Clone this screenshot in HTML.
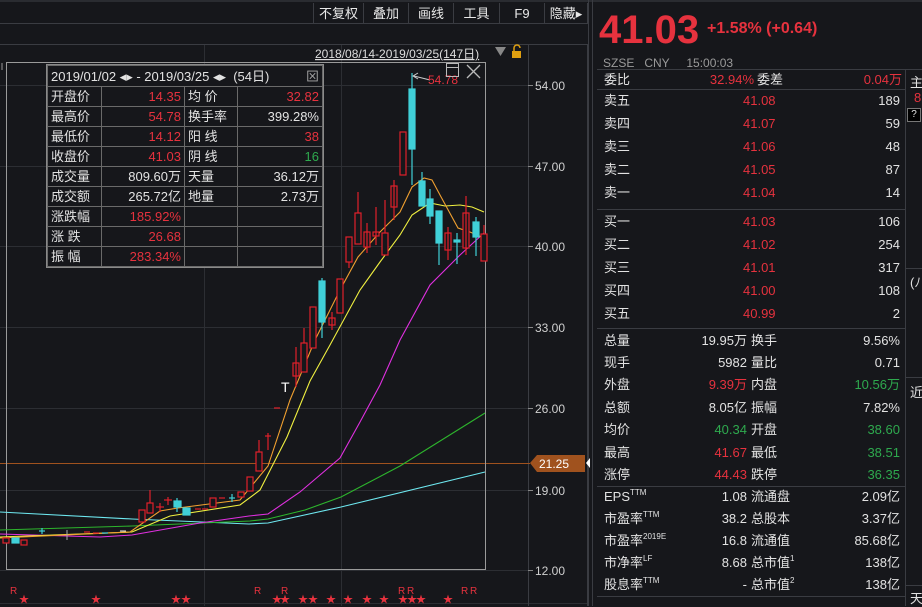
<!DOCTYPE html>
<html><head><meta charset="utf-8"><style>
*{margin:0;padding:0;box-sizing:border-box}
body{width:922px;height:606px;overflow:hidden;background:#16171b;font-family:"Liberation Sans","Noto Sans CJK SC",sans-serif;color:#e2e2e2;position:relative}
.a{position:absolute;white-space:nowrap}
.r{color:#e6323e}.g{color:#2ea94e}.w{color:#e2e2e2}
.tb{position:absolute;top:3px;height:21px;font-size:13px;line-height:21px;text-align:center;border-left:1px solid #3a3c42;color:#e8e8e8}
.info{position:absolute;left:46px;top:64px;width:278px;border:1px solid #8a8a8a;background:#16171b;font-size:13px}
.info table{border-collapse:collapse;width:100%}
.info td{border:1px solid #6a6a6a;height:20px;padding:0 3px;line-height:19px}
.info td.v{text-align:right}
.rp{font-size:13px}
.row{position:absolute;left:597px;width:308px;height:22px;line-height:22px}
.row span{position:absolute}
.hl{position:absolute;left:597px;width:308px;height:1px;background:#3a3c42}
sup{font-size:8px;vertical-align:baseline;position:relative;top:-6px;line-height:0}
</style></head><body>
<div class="a" style="left:0;top:0;width:922px;height:2px;background:#2a2c31"></div>
<div class="a" style="left:0;top:23px;width:588px;height:1px;background:#3a3c42"></div>
<div class="a" style="left:0;top:44px;width:588px;height:1px;background:#3a3c42"></div>
<div class="tb" style="left:313px;width:50px">不复权</div>
<div class="tb" style="left:363px;width:45px">叠加</div>
<div class="tb" style="left:408px;width:45px">画线</div>
<div class="tb" style="left:453px;width:46px">工具</div>
<div class="tb" style="left:499px;width:45px">F9</div>
<div class="tb" style="left:544px;width:44px;border-right:1px solid #3a3c42">隐藏▸</div>
<div class="a" style="left:588px;top:0;width:1px;height:606px;background:#3a3c42"></div>
<div class="a" style="left:592px;top:0;width:1px;height:606px;background:#3a3c42"></div>

<svg class="a" style="left:0;top:0" width="590" height="606">
<g stroke="#2c2e33" stroke-width="1">
<line x1="0" y1="85.5" x2="528" y2="85.5"/><line x1="0" y1="166.5" x2="528" y2="166.5"/><line x1="0" y1="246.5" x2="528" y2="246.5"/><line x1="0" y1="327.5" x2="528" y2="327.5"/><line x1="0" y1="408.5" x2="528" y2="408.5"/><line x1="0" y1="490.5" x2="528" y2="490.5"/><line x1="0" y1="570.5" x2="528" y2="570.5"/>
<line x1="204.5" y1="45" x2="204.5" y2="606"/><line x1="341.5" y1="45" x2="341.5" y2="606"/>
<line x1="0" y1="603.5" x2="588" y2="603.5"/>
</g>
<line x1="528.5" y1="45" x2="528.5" y2="606" stroke="#3a3c42"/>
<line x1="587.5" y1="45" x2="587.5" y2="606" stroke="#3a3c42"/>
<g stroke="#888" stroke-width="1"><line x1="528" y1="85.5" x2="533" y2="85.5"/><line x1="528" y1="166.5" x2="533" y2="166.5"/><line x1="528" y1="246.5" x2="533" y2="246.5"/><line x1="528" y1="327.5" x2="533" y2="327.5"/><line x1="528" y1="408.5" x2="533" y2="408.5"/><line x1="528" y1="490.5" x2="533" y2="490.5"/><line x1="528" y1="570.5" x2="533" y2="570.5"/></g>
<g font-size="12" fill="#d0d0d0" font-family="Liberation Sans"><text x="535" y="90">54.00</text><text x="535" y="171">47.00</text><text x="535" y="251">40.00</text><text x="535" y="332">33.00</text><text x="535" y="413">26.00</text><text x="535" y="495">19.00</text><text x="535" y="575">12.00</text></g>
<line x1="0" y1="463.5" x2="530" y2="463.5" stroke="#a0521e"/>
<polygon points="530,463 537,455 585,455 585,472 537,472" fill="#a0521e"/>
<text x="539" y="468" font-size="12" fill="#fff">21.25</text>
<polygon points="590,458 590,468 586,463" fill="#fff"/>
<rect x="6.5" y="62.5" width="479" height="507" fill="none" stroke="#9a9a9a"/>
<line x1="2" y1="63" x2="2" y2="70" stroke="#999"/>
<g fill="none" stroke-width="1.1">
<polyline stroke="#6ee8f0" points="0,512 132,519 249,524 268,523 341,507 485,472"/>
<polyline stroke="#2db52d" points="0,530 132,526 250,521 268,519 305,510 341,497 400,466 485,413"/>
<polyline stroke="#e030e0" points="0,534 100,537 132,535 200,523 249,516 268,514 300,492 340,458 360,422 380,385 400,340 430,285 460,255 484,233"/>
<polyline stroke="#f0f040" points="0,537 132,532 170,516 240,505 260,490 287,437 310,381 330,345 360,290 380,262 400,235 412,215 430,203 445,206 460,205 472,207 484,212"/>
<polyline stroke="#f0a030" points="0,538 130,532 160,511 178,508 240,500 268,466 290,400 315,340 340,290 358,257 380,232 400,212 412,187 424,178 432,180 440,195 458,228 470,232 484,238"/>
</g>
<g stroke="#e0202a" fill="#16171b" stroke-width="1.2">
<rect x="3" y="538" width="6" height="5"/><rect x="21" y="540" width="6" height="5"/>
<rect x="139" y="510" width="6" height="12"/><rect x="147" y="503" width="6" height="10"/><line x1="150" y1="490" x2="150" y2="503"/>
<rect x="210" y="498" width="6" height="9"/><rect x="238" y="492" width="6" height="5"/><rect x="247" y="477" width="6" height="14"/>
<rect x="256" y="452" width="6" height="19"/><line x1="259" y1="440" x2="259" y2="452"/>
<line x1="268" y1="433" x2="268" y2="450"/><line x1="265" y1="436" x2="271" y2="436"/>
<line x1="274" y1="408" x2="280" y2="408"/>
<rect x="293" y="363" width="6" height="13"/><line x1="296" y1="347" x2="296" y2="387"/>
<rect x="301" y="343" width="6" height="29"/><line x1="304" y1="328" x2="304" y2="343"/>
<rect x="310" y="307" width="6" height="41"/>
<rect x="329" y="318" width="6" height="7"/><line x1="332" y1="312" x2="332" y2="330"/>
<rect x="337" y="279" width="6" height="34"/>
<rect x="346" y="237" width="6" height="25"/><line x1="349" y1="262" x2="349" y2="268"/>
<rect x="355" y="213" width="6" height="31"/><line x1="358" y1="192" x2="358" y2="213"/>
<rect x="364" y="232" width="6" height="15"/><line x1="367" y1="223" x2="367" y2="253"/>
<rect x="373" y="232" width="6" height="4"/><line x1="376" y1="207" x2="376" y2="245"/>
<rect x="382" y="233" width="6" height="22"/><line x1="385" y1="200" x2="385" y2="233"/>
<rect x="391" y="186" width="6" height="21"/><line x1="394" y1="180" x2="394" y2="220"/>
<rect x="400" y="132" width="6" height="43"/>
<rect x="445" y="233" width="6" height="17"/><line x1="448" y1="227" x2="448" y2="260"/>
<rect x="463" y="213" width="6" height="35"/><line x1="466" y1="196" x2="466" y2="255"/>
<rect x="481" y="234" width="6" height="27"/><line x1="484" y1="225" x2="484" y2="234"/>
</g>
<g stroke="#e0202a" stroke-width="1.2"><line x1="160" y1="503" x2="160" y2="512"/><line x1="156" y1="507" x2="164" y2="507"/><line x1="168" y1="497" x2="168" y2="505"/><line x1="164" y1="500" x2="172" y2="500"/><line x1="195" y1="509" x2="201" y2="509"/><line x1="202" y1="509" x2="208" y2="509"/><line x1="219" y1="498" x2="225" y2="498"/><line x1="84" y1="532" x2="90" y2="532"/><line x1="93" y1="533" x2="99" y2="533"/></g>
<g stroke="#40d0d8" fill="#40d0d8" stroke-width="1.2">
<rect x="12" y="538" width="7" height="5"/>
<rect x="174" y="501" width="7" height="6"/><line x1="177" y1="498" x2="177" y2="512"/>
<rect x="183" y="508" width="7" height="7"/>
<line x1="229" y1="498" x2="235" y2="498"/><line x1="232" y1="494" x2="232" y2="502"/>
<line x1="102" y1="533" x2="108" y2="533"/><line x1="39" y1="531" x2="45" y2="531"/><line x1="42" y1="528" x2="42" y2="534"/>
<rect x="319" y="281" width="6" height="41"/><line x1="322" y1="278" x2="322" y2="338"/>
<rect x="409" y="89" width="6" height="60"/><line x1="412" y1="73" x2="412" y2="185"/>
<rect x="419" y="181" width="6" height="25"/><line x1="422" y1="172" x2="422" y2="181"/>
<rect x="427" y="199" width="6" height="17"/><line x1="430" y1="189" x2="430" y2="224"/>
<rect x="436" y="211" width="6" height="32"/><line x1="439" y1="243" x2="439" y2="265"/>
<rect x="454" y="240" width="6" height="2"/><line x1="457" y1="233" x2="457" y2="264"/>
<rect x="473" y="222" width="6" height="15"/><line x1="476" y1="217" x2="476" y2="256"/>
</g>
<line x1="67" y1="530" x2="67" y2="540" stroke="#aaa"/><line x1="120" y1="531" x2="126" y2="531" stroke="#eee"/>
<text x="281" y="392" font-size="14" fill="#fff">T</text>
<path d="M414 76 L430 80" stroke="#ccc" fill="none"/><path d="M418 73 L413 76 L418 79" stroke="#ccc" fill="none"/>
<text x="428" y="84" font-size="12" fill="#e6323e">54.78</text>
<rect x="446.5" y="63.5" width="12" height="13" fill="none" stroke="#bbb"/><line x1="446" y1="67.5" x2="459" y2="67.5" stroke="#bbb"/>
<path d="M467 65 L480 78 M480 65 L467 78" stroke="#bbb" stroke-width="1.3"/>
<text x="315" y="58" font-size="12" fill="#ddd" text-decoration="underline">2018/08/14-2019/03/25(147日)</text>
<polygon points="495,47 506,47 500.5,56" fill="#888"/>
<rect x="512" y="51" width="9" height="7" fill="#e0a010"/><path d="M514 51 V48 a3 3 0 0 1 6 0" stroke="#e0a010" fill="none" stroke-width="1.5"/>
<g font-size="10" fill="#e6323e"><text x="10" y="594">R</text><text x="254" y="594">R</text><text x="281" y="594">R</text><text x="398" y="594">R</text><text x="407" y="594">R</text><text x="461" y="594">R</text><text x="470" y="594">R</text>
<text x="19" y="603">★</text><text x="91" y="603">★</text><text x="171" y="603">★</text><text x="181" y="603">★</text><text x="272" y="603">★</text><text x="280" y="603">★</text><text x="298" y="603">★</text><text x="308" y="603">★</text><text x="326" y="603">★</text><text x="343" y="603">★</text><text x="362" y="603">★</text><text x="379" y="603">★</text><text x="398" y="603">★</text><text x="407" y="603">★</text><text x="416" y="603">★</text><text x="443" y="603">★</text></g>
</svg>

<div class="info"><table>
<tr><td colspan="4" style="height:21px">2019/01/02 ◂▸ - 2019/03/25 ◂▸ &nbsp;(54日) <span style="float:right;color:#aaa">⊠</span></td></tr>
<tr><td style="width:54px">开盘价</td><td class="v r" style="width:83px">14.35</td><td style="width:53px">均 价</td><td class="v r">32.82</td></tr>
<tr><td>最高价</td><td class="v r">54.78</td><td>换手率</td><td class="v">399.28%</td></tr>
<tr><td>最低价</td><td class="v r">14.12</td><td>阳 线</td><td class="v r">38</td></tr>
<tr><td>收盘价</td><td class="v r">41.03</td><td>阴 线</td><td class="v g">16</td></tr>
<tr><td>成交量</td><td class="v">809.60万</td><td>天量</td><td class="v">36.12万</td></tr>
<tr><td>成交额</td><td class="v">265.72亿</td><td>地量</td><td class="v">2.73万</td></tr>
<tr><td>涨跌幅</td><td class="v r">185.92%</td><td></td><td></td></tr>
<tr><td>涨 跌</td><td class="v r">26.68</td><td></td><td></td></tr>
<tr><td>振 幅</td><td class="v r">283.34%</td><td></td><td></td></tr>
</table></div>

<div class="a r" style="left:599px;top:8px;font-size:40px;font-weight:bold;line-height:44px">41.03</div>
<div class="a r" style="left:707px;top:20px;font-size:16px;font-weight:bold">+1.58% (+0.64)</div>
<div class="a" style="left:603px;top:56px;font-size:12px;color:#9a9a9a">SZSE&nbsp;&nbsp; CNY&nbsp;&nbsp;&nbsp;&nbsp; 15:00:03</div>
<div class="a" style="left:905px;top:69px;width:1px;height:537px;background:#3a3c42"></div>
<div class="hl" style="top:69px;width:325px"></div>
<div class="rp">
<div class="row" style="top:69px"><span style="left:7px">委比</span><span class="r" style="right:151px">32.94%</span><span style="left:160px">委差</span><span class="r" style="right:3px">0.04万</span></div>
<div class="hl" style="top:89px"></div>
<div class="row" style="top:90px"><span style="left:7px">卖五</span><span class="r" style="left:146px">41.08</span><span style="right:5px">189</span></div>
<div class="row" style="top:113px"><span style="left:7px">卖四</span><span class="r" style="left:146px">41.07</span><span style="right:5px">59</span></div>
<div class="row" style="top:136px"><span style="left:7px">卖三</span><span class="r" style="left:146px">41.06</span><span style="right:5px">48</span></div>
<div class="row" style="top:159px"><span style="left:7px">卖二</span><span class="r" style="left:146px">41.05</span><span style="right:5px">87</span></div>
<div class="row" style="top:182px"><span style="left:7px">卖一</span><span class="r" style="left:146px">41.04</span><span style="right:5px">14</span></div>
<div class="hl" style="top:209px"></div>
<div class="row" style="top:211px"><span style="left:7px">买一</span><span class="r" style="left:146px">41.03</span><span style="right:5px">106</span></div>
<div class="row" style="top:234px"><span style="left:7px">买二</span><span class="r" style="left:146px">41.02</span><span style="right:5px">254</span></div>
<div class="row" style="top:257px"><span style="left:7px">买三</span><span class="r" style="left:146px">41.01</span><span style="right:5px">317</span></div>
<div class="row" style="top:280px"><span style="left:7px">买四</span><span class="r" style="left:146px">41.00</span><span style="right:5px">108</span></div>
<div class="row" style="top:303px"><span style="left:7px">买五</span><span class="r" style="left:146px">40.99</span><span style="right:5px">2</span></div>
<div class="hl" style="top:328px"></div>
<div class="row" style="top:330px"><span style="left:7px">总量</span><span style="right:158px">19.95万</span><span style="left:154px">换手</span><span style="right:5px">9.56%</span></div>
<div class="row" style="top:352px"><span style="left:7px">现手</span><span style="right:158px">5982</span><span style="left:154px">量比</span><span style="right:5px">0.71</span></div>
<div class="row" style="top:374px"><span style="left:7px">外盘</span><span class="r" style="right:158px">9.39万</span><span style="left:154px">内盘</span><span class="g" style="right:5px">10.56万</span></div>
<div class="row" style="top:397px"><span style="left:7px">总额</span><span style="right:158px">8.05亿</span><span style="left:154px">振幅</span><span style="right:5px">7.82%</span></div>
<div class="row" style="top:419px"><span style="left:7px">均价</span><span class="g" style="right:158px">40.34</span><span style="left:154px">开盘</span><span class="g" style="right:5px">38.60</span></div>
<div class="row" style="top:442px"><span style="left:7px">最高</span><span class="r" style="right:158px">41.67</span><span style="left:154px">最低</span><span class="g" style="right:5px">38.51</span></div>
<div class="row" style="top:464px"><span style="left:7px">涨停</span><span class="r" style="right:158px">44.43</span><span style="left:154px">跌停</span><span class="g" style="right:5px">36.35</span></div>
<div class="hl" style="top:486px"></div>
<div class="row" style="top:486px"><span style="left:7px">EPS<sup>TTM</sup></span><span style="right:158px">1.08</span><span style="left:154px">流通盘</span><span style="right:5px">2.09亿</span></div>
<div class="row" style="top:508px"><span style="left:7px">市盈率<sup>TTM</sup></span><span style="right:158px">38.2</span><span style="left:154px">总股本</span><span style="right:5px">3.37亿</span></div>
<div class="row" style="top:530px"><span style="left:7px">市盈率<sup>2019E</sup></span><span style="right:158px">16.8</span><span style="left:154px">流通值</span><span style="right:5px">85.68亿</span></div>
<div class="row" style="top:552px"><span style="left:7px">市净率<sup>LF</sup></span><span style="right:158px">8.68</span><span style="left:154px">总市值<sup>1</sup></span><span style="right:5px">138亿</span></div>
<div class="row" style="top:574px"><span style="left:7px">股息率<sup>TTM</sup></span><span style="right:158px">-</span><span style="left:154px">总市值<sup>2</sup></span><span style="right:5px">138亿</span></div>
<div class="hl" style="top:596px"></div>
</div>
<div class="a" style="left:910px;top:72px;font-size:13px">主</div>
<div class="a r" style="left:914px;top:90px;font-size:13px">8</div>
<div class="a" style="left:907px;top:108px;width:14px;height:14px;background:#000;border:1px solid #777;font-size:10px;text-align:center;line-height:12px">?</div>
<div class="a" style="left:905px;top:268px;width:17px;height:1px;background:#3a3c42"></div>
<div class="a" style="left:910px;top:272px;font-size:13px">(ﾉ</div>
<div class="a" style="left:905px;top:377px;width:17px;height:1px;background:#3a3c42"></div>
<div class="a" style="left:910px;top:382px;font-size:13px">近</div>
<div class="a" style="left:905px;top:585px;width:17px;height:1px;background:#3a3c42"></div>
<div class="a" style="left:910px;top:588px;font-size:13px">天</div>
</body></html>
